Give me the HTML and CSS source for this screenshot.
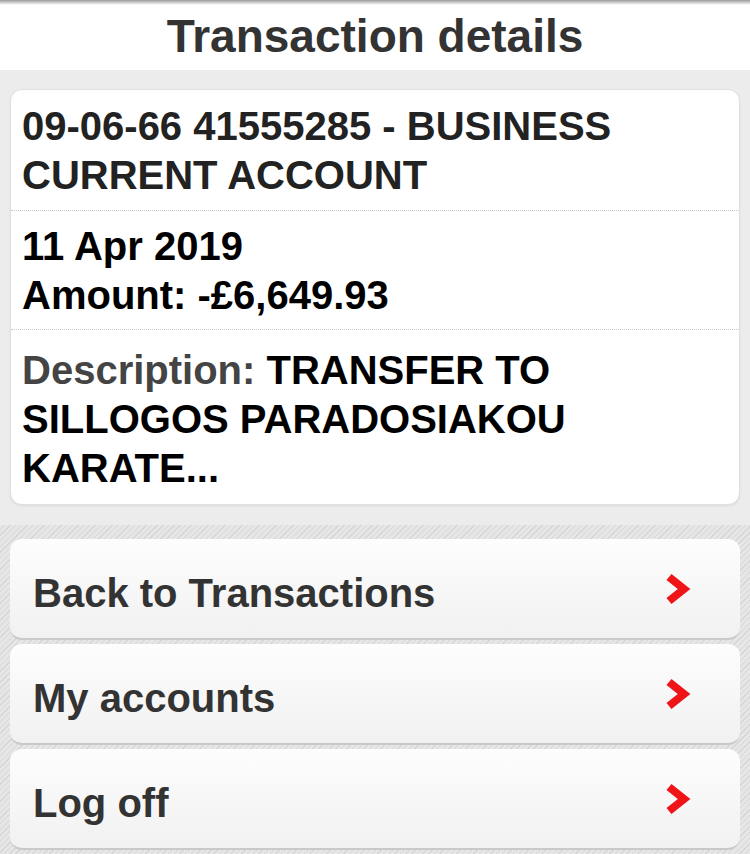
FILE: index.html
```html
<!DOCTYPE html>
<html lang="en">
<head>
  <meta charset="UTF-8" />
  <meta name="viewport" content="width=device-width, initial-scale=1.0"/>
  <title>Transaction details</title>
  <link rel="stylesheet" href="styles.css">
</head>
<body>
  <header class="topbar">
    <h1>Transaction details</h1>
  </header>

  <section class="details">
    <div class="card">
      <div class="row row-account">09-06-66 41555285 - BUSINESS CURRENT ACCOUNT</div>
      <div class="row row-amount">
        11 Apr 2019<br>
        Amount: -£6,649.93
      </div>
      <div class="row row-desc"><span class="label">Description:</span> TRANSFER TO SILLOGOS PARADOSIAKOU KARATE...</div>
    </div>
  </section>

  <nav class="links">
    <a class="link" href="#">
      <span class="link-text">Back to Transactions</span>
      <svg class="chevron" width="26" height="32" viewBox="0 0 26 32"><polyline points="4,4 19,16 4,28" /></svg>
    </a>
    <a class="link" href="#">
      <span class="link-text">My accounts</span>
      <svg class="chevron" width="26" height="32" viewBox="0 0 26 32"><polyline points="4,4 19,16 4,28" /></svg>
    </a>
    <a class="link" href="#">
      <span class="link-text">Log off</span>
      <svg class="chevron" width="26" height="32" viewBox="0 0 26 32"><polyline points="4,4 19,16 4,28" /></svg>
    </a>
  </nav>
</body>
</html>
```

FILE: styles.css
```css
body {
  margin: 0;
  font-family: 'Liberation Sans', Arial, sans-serif;
  font-weight: bold;
  background-color: #ececec;
  color: #111;
}

.topbar {
  height: 70px;
  background: linear-gradient(#9a9a9a, #fff 5px);
  text-align: center;
}

.topbar h1 {
  margin: 0;
  font-size: 46px;
  line-height: 72px;
  color: #333;
}

.details {
  padding: 19px 10px 20px;
}

.card {
  background-color: #fff;
  border: 1px solid #e0e0e0;
  border-radius: 12px;
  box-shadow: 0 1px 2px rgba(0,0,0,0.08);
}

.row {
  padding: 0 11px;
  font-size: 40px;
  line-height: 49px;
  border-bottom: 1px dotted #c8c8c8;
}

.row-account {
  padding-top: 12px;
  padding-bottom: 10px;
  color: #222;
}

.row-amount {
  padding-top: 11px;
  padding-bottom: 9px;
  color: #000;
}

.row-desc {
  padding-top: 16px;
  padding-bottom: 11px;
  border-bottom: none;
  color: #000;
}

.row-desc .label {
  color: #444;
}

.links {
  min-height: 331px;
  padding: 14px 10px 6px;
  display: flex;
  flex-direction: column;
  gap: 4px;
  box-sizing: border-box;
  background: repeating-linear-gradient(135deg, #e6e6e6 0, #e6e6e6 3px, #d6d6d6 3px, #d6d6d6 4px);
}

.link {
  height: 101px;
  display: flex;
  align-items: center;
  justify-content: space-between;
  padding: 0 49px 0 23px;
  box-sizing: border-box;
  border-radius: 12px;
  background: linear-gradient(#fdfdfd, #f1f1f1);
  border-bottom: 2px solid #c9c9c9;
  color: #333;
  font-size: 40px;
  text-decoration: none;
}

.link-text {
  padding-top: 9px;
}

.chevron polyline {
  fill: none;
  stroke: #ee1418;
  stroke-width: 8;
  stroke-linejoin: miter;
}
```
